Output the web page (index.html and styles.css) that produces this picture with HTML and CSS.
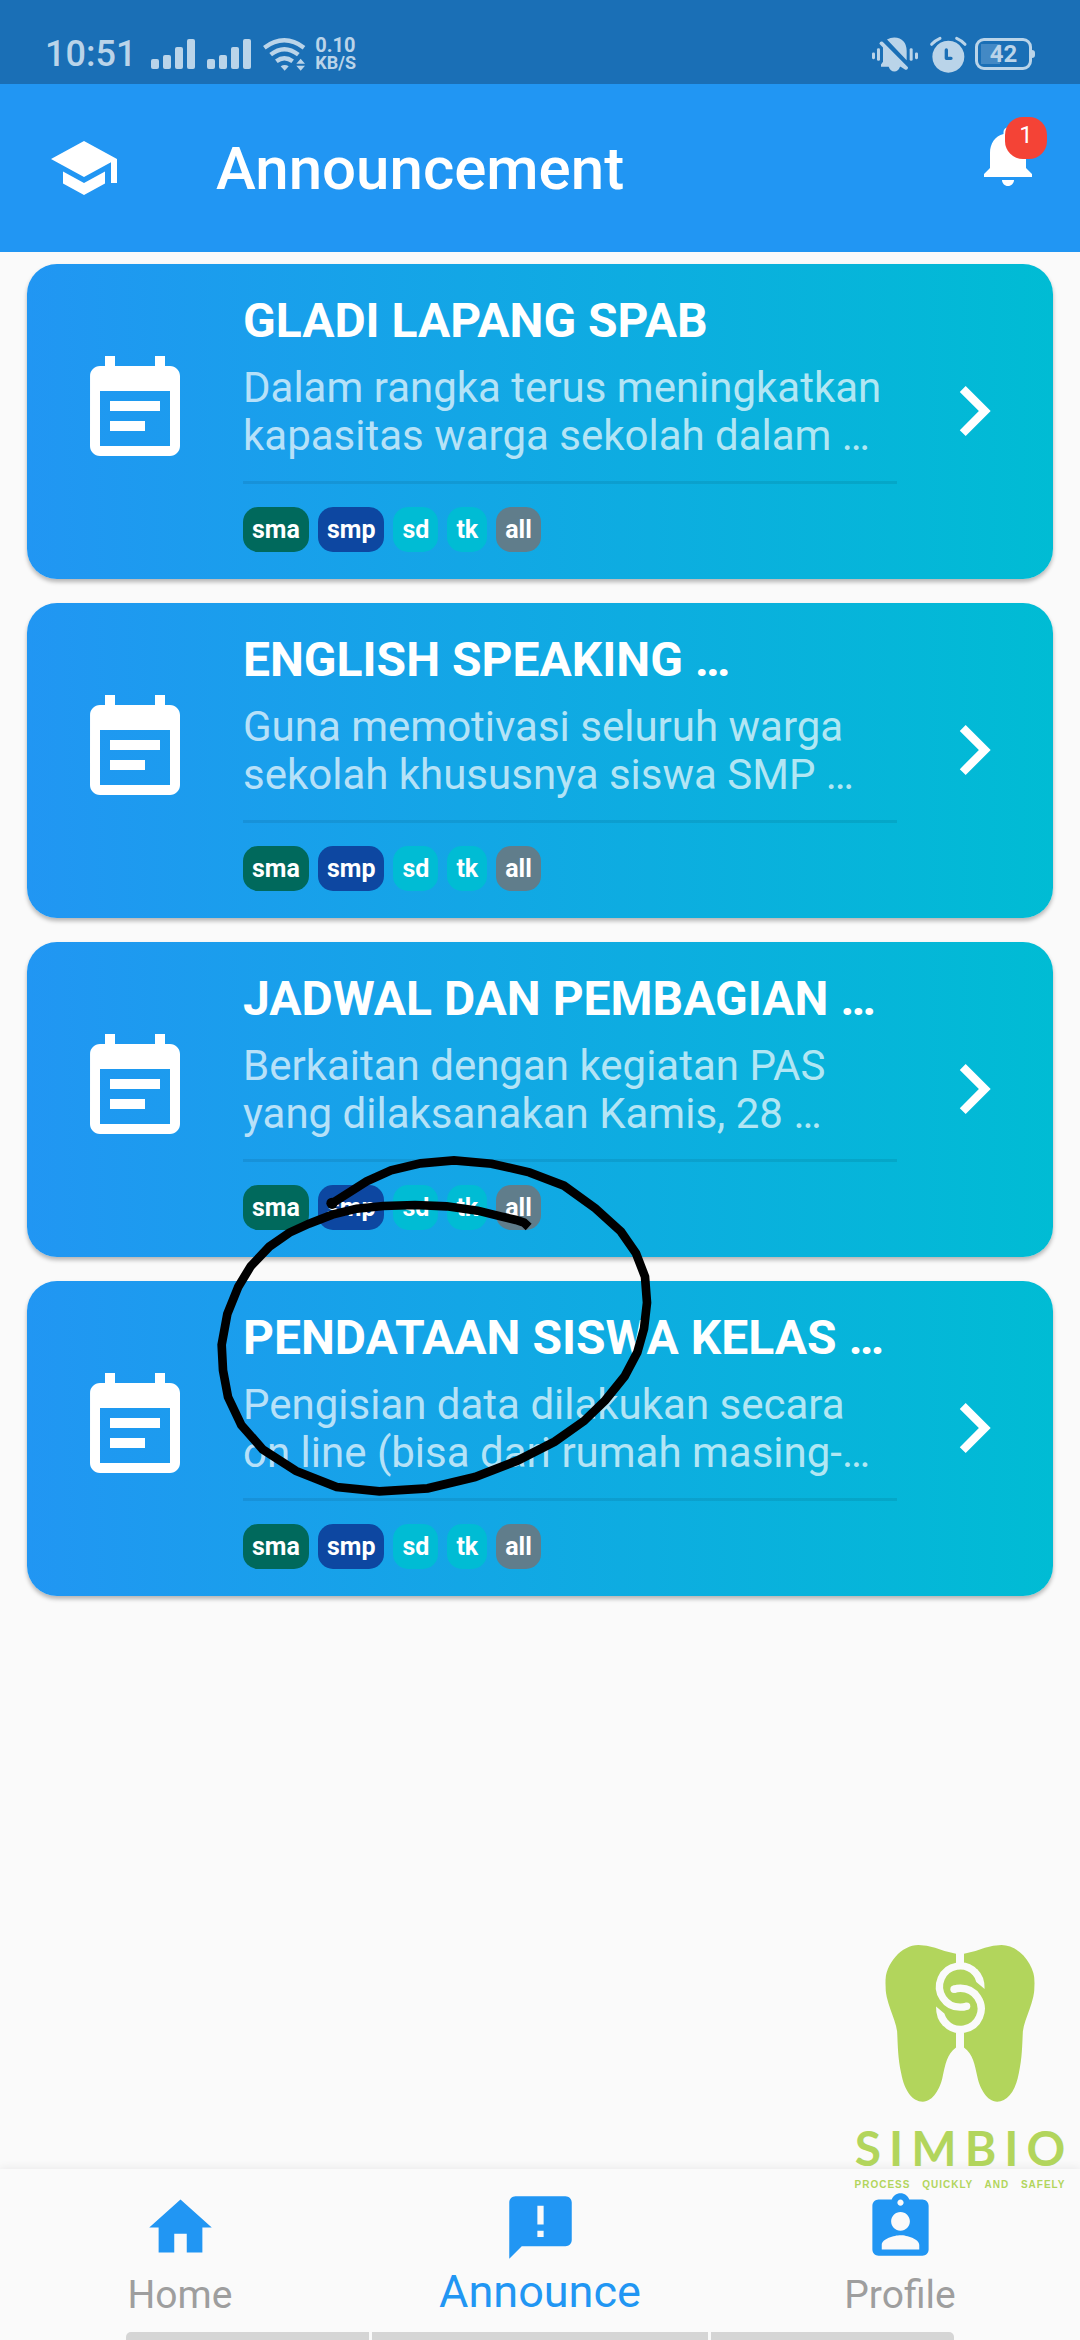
FILE: index.html
```html
<!DOCTYPE html>
<html lang="id">
<head>
<meta charset="utf-8">
<meta name="viewport" content="width=device-width, initial-scale=1">
<title>Announcement</title>
<link rel="stylesheet" href="styles.css">
</head>
<body>
<svg class="defs" aria-hidden="true">
  <symbol id="note" viewBox="0 0 24 24"><path d="M17 10H7v2h10v-2zm2-7h-1V1h-2v2H8V1H6v2H5c-1.11 0-1.99.9-1.99 2L3 19c0 1.1.89 2 2 2h14c1.1 0 2-.9 2-2V5c0-1.1-.9-2-2-2zm0 16H5V8h14v11zm-5-5H7v2h7v-2z"/></symbol>
  <symbol id="chevron" viewBox="0 0 24 24"><path d="M8.59 16.59L13.17 12 8.59 7.41 10 6l6 6-6 6-1.41-1.41z"/></symbol>
  <symbol id="signal" viewBox="0 0 44 32"><rect x="0" y="21" width="8" height="10" rx="2"/><rect x="12" y="17" width="8" height="14" rx="2"/><rect x="24" y="9" width="8" height="22" rx="2"/><rect x="36" y="1" width="8" height="30" rx="2"/></symbol>
</svg>
<div class="app">
  <header>
    <div class="status">
      <span class="clock">10:51</span>
      <svg class="signal"><use href="#signal"/></svg>
      <svg class="signal"><use href="#signal"/></svg>
      <svg class="wifi" viewBox="367 36 126 102"><g fill="none" stroke="currentColor" stroke-width="13"><path d="M371 68Q431 24 490 68"/><path d="M390 89Q431 56 473 89"/><path d="M407 109Q431 91 456 109"/></g><path d="M420 124q12-8 24 0l-12 13z"/><path d="M467 116l13-15 13 15zM467 122h26l-13 15z"/></svg>
      <span class="rate"><span>0.10</span><span class="unit">KB/S</span></span>
      <span class="spacer"></span>
      <svg class="mute" viewBox="35 35 138 104"><path d="M80 42Q90 36 102 36Q138 38 139 76V104zM57 55q2-9 10-6L143 125q0 8-8 8l-14-9h-2q-5 14-17 14t-17-14H62v-7l6-8V66z"/><rect x="35" y="81" width="9" height="20" rx="4"/><rect x="50" y="68" width="9" height="38" rx="4"/><rect x="148" y="68" width="9" height="38" rx="4"/><rect x="164" y="81" width="9" height="20" rx="4"/></svg>
      <svg class="alarm" viewBox="210 28 108 111"><path fill-rule="evenodd" d="M265 42a48 48 0 1 0 .1 0zM259 65q5 0 5 5v20h9q5 0 5 5t-5 5h-14q-5 0-5-5V70q0-5 5-5z"/><path d="M215 53Q226 41 240 35M315 53Q304 41 290 35" fill="none" stroke="currentColor" stroke-width="9" stroke-linecap="round"/></svg>
      <span class="battery">42</span>
    </div>
    <div class="bar">
      <svg class="icon" viewBox="0 0 24 24"><path d="M5 13.18v4L12 21l7-3.820v-4L12 17l-7-3.820zM12 3L1 9l11 6 9-4.910V17h2V9L12 3z"/></svg>
      <h1>Announcement</h1>
      <button class="bell" aria-label="Notifications">
        <svg class="icon" viewBox="0 0 24 24"><path d="M12 22c1.100 0 2-.9 2-2h-4c0 1.100.89 2 2 2zm6-6v-5c0-3.070-1.640-5.640-4.500-6.320V4c0-.83-.67-1.500-1.500-1.500s-1.500.67-1.500 1.500v.68C7.630 5.360 6 7.920 6 11v5l-2 2v1h16v-1l-2-2z"/></svg>
        <span class="badge">1</span>
      </button>
    </div>
  </header>
  <main>
    <a class="card" href="#gladi">
      <svg class="note"><use href="#note"/></svg>
      <div class="body">
        <h2>GLADI LAPANG SPAB</h2>
        <p>Dalam rangka terus meningkatkan kapasitas warga sekolah dalam …</p>
        <div class="tags"><span class="sma">sma</span><span class="smp">smp</span><span class="sd">sd</span><span class="tk">tk</span><span class="all">all</span></div>
      </div>
      <svg class="chevron"><use href="#chevron"/></svg>
    </a>
    <a class="card" href="#english">
      <svg class="note"><use href="#note"/></svg>
      <div class="body">
        <h2>ENGLISH SPEAKING …</h2>
        <p>Guna memotivasi seluruh warga sekolah khususnya siswa SMP …</p>
        <div class="tags"><span class="sma">sma</span><span class="smp">smp</span><span class="sd">sd</span><span class="tk">tk</span><span class="all">all</span></div>
      </div>
      <svg class="chevron"><use href="#chevron"/></svg>
    </a>
    <a class="card" href="#jadwal">
      <svg class="note"><use href="#note"/></svg>
      <div class="body">
        <h2>JADWAL DAN PEMBAGIAN …</h2>
        <p>Berkaitan dengan kegiatan PAS yang dilaksanakan Kamis, 28 …</p>
        <div class="tags"><span class="sma">sma</span><span class="smp">smp</span><span class="sd">sd</span><span class="tk">tk</span><span class="all">all</span></div>
      </div>
      <svg class="chevron"><use href="#chevron"/></svg>
    </a>
    <a class="card" href="#pendataan">
      <svg class="note"><use href="#note"/></svg>
      <div class="body">
        <h2>PENDATAAN SISWA KELAS …</h2>
        <p>Pengisian data dilakukan secara on line (bisa dari rumah masing-…</p>
        <div class="tags"><span class="sma">sma</span><span class="smp">smp</span><span class="sd">sd</span><span class="tk">tk</span><span class="all">all</span></div>
      </div>
      <svg class="chevron"><use href="#chevron"/></svg>
      <svg class="scribble" viewBox="0 0 1440 1200"><circle cx="396" cy="250" r="17"/><path fill="none" stroke="currentColor" stroke-width="26" d="M396 250L500 184 573 151 662 130 762 121 875 131 988 157 1092 197 1186 265 1263 335 1308 400 1335 470 1341 548 1332 626 1312 697 1274 769 1216 841 1152 903 1064 965 952 1022 825 1071 683 1105 538 1114 410 1101 288 1053 188 988 124 915 84 831 69 751 65 674 82 582 115 500 152 439 208 380 268 338 327 311 397 284 470 266 550 258 645 255 740 259 833 272 902 289 948 300 972 308 986 321"/></svg>
    </a>
  </main>
  <nav>
    <a href="#home"><svg class="tab" viewBox="0 0 24 24"><path d="M10 20v-6h4v6h5v-8h3L12 3 2 12h3v8z"/></svg><span>Home</span></a>
    <a class="active" href="#announce"><svg class="tab" viewBox="0 0 24 24"><path d="M20 2H4c-1.100 0-1.990.9-1.990 2L2 22l4-4h14c1.100 0 2-.9 2-2V4c0-1.100-.9-2-2-2zm-7 9h-2V5h2v6zm0 4h-2v-2h2v2z"/></svg><span>Announce</span></a>
    <a href="#profile"><svg class="tab" viewBox="0 0 24 24"><path d="M19 3h-4.180C14.400 1.840 13.300 1 12 1c-1.300 0-2.400.84-2.820 2H5c-1.100 0-2 .9-2 2v14c0 1.100.9 2 2 2h14c1.100 0 2-.9 2-2V5c0-1.100-.9-2-2-2zm-7 0c.55 0 1 .45 1 1s-.45 1-1 1-1-.45-1-1 .45-1 1-1zm0 4c1.660 0 3 1.340 3 3s-1.340 3-3 3-3-1.340-3-3 1.340-3 3-3zm6 12H6v-1.400c0-2 4-3.100 6-3.100s6 1.100 6 3.100V19z"/></svg><span>Profile</span></a>
    <div class="gesture"><i></i><i class="wide"></i><i></i></div>
    <div class="brand">
      <svg class="tooth" viewBox="0 0 450 472">
        <mask id="emblem" maskUnits="userSpaceOnUse" x="0" y="0" width="450" height="472">
          <rect width="450" height="472" fill="#fff"/>
          <g fill="none" stroke="#000" stroke-width="24">
            <path d="M225 0V56M225 262V320"/>
            <path stroke-width="22" d="M271 83A62 62 0 1 0 226 187Q236 187 245 184"/>
            <path stroke-width="22" d="M181 234A62 62 0 1 0 226 130Q216 130 207 133"/>
          </g>
          <g fill="#000">
            <circle cx="245" cy="184" r="11"/><circle cx="207" cy="133" r="11"/>
            <path d="M262 89Q270 98 274 111L299 132Q300 95 277 73zM190 228Q182 219 178 206L153 185Q152 222 175 244z"/>
          </g>
        </mask>
        <path mask="url(#emblem)" d="M213 26Q180 20 150 8 125 0 100 0C50 0 0 55 0 115 0 175 30 215 36 260 38 300 38 340 48 385 58 440 83 471 113 471 145 471 165 430 172 400 182 355 185 330 213 308H237C265 330 268 355 278 400 285 430 305 471 337 471 367 471 392 440 402 385 412 340 412 300 414 260 420 215 450 175 450 115 450 55 400 0 350 0Q325 0 300 8 270 20 237 26z"/>
      </svg>
      <strong>SIMBIO</strong>
      <small>PROCESS QUICKLY AND SAFELY</small>
    </div>
  </nav>
</div>
</body>
</html>
```
FILE: styles.css
```css
* { box-sizing: border-box; margin: 0; }
body { font-family: Roboto, sans-serif; background: #fafafa; }
svg { display: block; flex: none; fill: currentColor; overflow: visible; }
a { color: inherit; text-decoration: none; }
.defs { display: none; }
.app { min-height: 100vh; display: flex; flex-direction: column; }

header { background: #2196f3; color: #fff; }
.status { height: 84px; padding: 24px 48px 0 45px; display: flex; align-items: center; background: #1a6fb6; color: #bad4e9; }
.clock { font-size: 36px; font-weight: 500; margin-right: 15px; }
.signal { width: 44px; height: 32px; margin-right: 12px; }
.wifi { width: 42px; height: 34px; margin-right: 10px; }
.rate { display: flex; flex-direction: column; font-size: 20px; line-height: 18px; font-weight: 700; }
.unit { font-size: 18px; }
.spacer { flex: 1; }
.mute { width: 46px; height: 35px; margin-right: 12px; }
.alarm { width: 36px; height: 37px; margin-right: 9px; }
.battery { position: relative; width: 57px; height: 32px; border: 3px solid; border-radius: 9px; font-size: 24px; line-height: 26px; font-weight: 700; text-align: center; background: linear-gradient(#4389c5, #4389c5) 3px 3px / 19px 20px no-repeat; }
.battery::after { content: ""; position: absolute; right: -6px; top: 9px; width: 3px; height: 8px; border-radius: 0 3px 3px 0; background: currentColor; }

.bar { height: 168px; padding: 0 36px 0 48px; display: flex; align-items: center; }
.icon { width: 72px; height: 72px; }
h1 { flex: 1; margin-left: 96px; font-size: 60px; font-weight: 500; }
.bell { position: relative; height: 96px; padding: 0 0 24px; border: 0; background: none; color: inherit; font: inherit; }
.badge { position: absolute; top: -3px; right: -3px; width: 42px; height: 42px; border-radius: 18px; background: #f44336; font-size: 24px; line-height: 36px; text-align: center; }

main { flex: 1; padding: 12px 27px; display: flex; flex-direction: column; gap: 24px; }
.card { position: relative; display: flex; align-items: center; padding: 30px 29px 27px 48px; border-radius: 30px; color: #fff; background: linear-gradient(90deg, #2196f3, #00bcd4); box-shadow: 0 3px 4px rgba(0, 0, 0, .28); }
.note { width: 120px; height: 120px; margin: 0 48px 24px 0; }
.body { flex: 1; min-width: 0; }
h2 { font-size: 48px; line-height: 54px; font-weight: 700; }
p { margin-top: 16px; font-size: 42px; line-height: 48px; color: rgba(255, 255, 255, .7); }
.tags { display: flex; gap: 9px; margin-top: 21px; padding-top: 23px; border-top: 3px solid rgba(0, 0, 0, .08); }
.tags span { padding: 0 9px; border-radius: 15px; font-size: 25px; line-height: 45px; font-weight: 700; }
.sma { background: #00695c; }
.smp { background: #0d47a1; }
.sd, .tk { background: #00bcd4; }
.all { background: #607d8b; }
.chevron { width: 100px; height: 100px; margin: 0 0 24px 27px; }
.scribble { position: absolute; left: 173px; top: -161px; width: 480px; height: 400px; color: #000; z-index: 1; }

nav { position: relative; height: 171px; padding-top: 21px; display: flex; background: #fafafa; color: #9e9e9e; box-shadow: 0 -2px 8px rgba(0, 0, 0, .06); }
nav a { flex: 1; display: flex; flex-direction: column; align-items: center; font-size: 39px; line-height: 60px; }
nav .active { color: #2196f3; font-size: 45px; line-height: 54px; }
.tab { width: 75px; height: 75px; color: #2196f3; }
.gesture { position: absolute; left: 126px; right: 126px; bottom: 0; height: 8px; display: flex; gap: 3px; border-radius: 5px 5px 0 0; overflow: hidden; }
.gesture i { flex: 243; background: #d5d5d5; }
.gesture .wide { flex: 336; }
.brand { position: absolute; right: 16px; top: -224px; width: 208px; display: flex; flex-direction: column; align-items: center; color: #b2d55c; }
.tooth { width: 150px; height: 157px; }
.brand strong { margin: 17px -8px 0 0; font: 700 48px/58px Lato, sans-serif; letter-spacing: 8px; }
.brand small { margin-top: 2px; font: 700 10px/12px "Liberation Sans", sans-serif; letter-spacing: 1px; word-spacing: 8px; white-space: nowrap; }
```
